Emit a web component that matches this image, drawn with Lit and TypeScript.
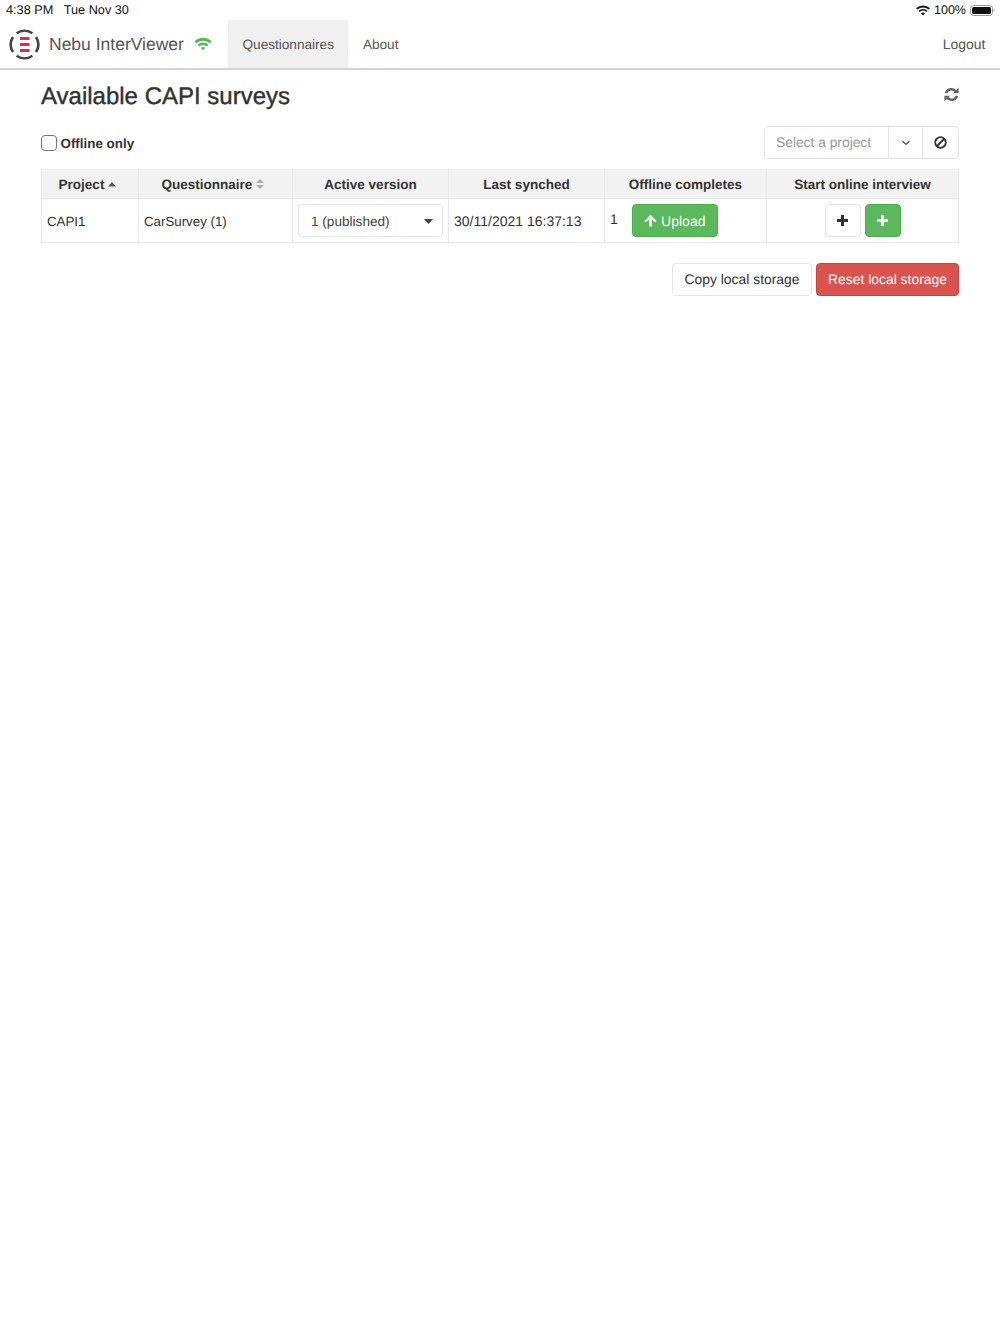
import { LitElement, html, css, svg } from "lit";
import { customElement } from "lit/decorators.js";

const plus = svg`<path d="M5 2h3v4h4v3H8v4H5V9H1V6h4z" fill="currentColor"/>`;

@customElement("app-root")
export class AppRoot extends LitElement {
  static styles = css`
    :host { display: block; height: 1334px; background: #fff; color: #333; font-family: "Liberation Sans", Arial, sans-serif; font-size: 14px; text-rendering: geometricPrecision; }
    * { box-sizing: border-box; }
    svg { display: block; }
    .status { height: 20px; display: flex; align-items: center; justify-content: space-between; padding: 0 5px 0 6px; font-size: 12.7px; color: #111; }
    .status .left { display: flex; gap: 10.5px; }
    .status .right { display: flex; align-items: center; gap: 4px; font-size: 12.5px; }
    .nav { height: 50px; display: flex; border-bottom: 2px solid #d4d4d4; align-items: stretch; }
    .brand { display: flex; align-items: center; width: 228px; padding-left: 8px; color: #555; font-size: 17.5px; }
    .brand .logo { margin-right: 8px; }
    .brand .wifi { margin-left: 10px; }
    .tab { display: flex; align-items: center; padding: 0 14.5px; color: #555; font-size: 13.6px; }
    .tab.active { background: #f0f0f0; }
    .tab.logout { font-size: 14px; }
    .spacer { flex: 1; }
    .main { padding: 0 41px; }
    .head { display: flex; justify-content: space-between; align-items: flex-start; height: 56px; padding-top: 13px; }
    h1 { margin: 0; font-size: 24px; font-weight: 400; line-height: 28px; color: #333; -webkit-text-stroke: 0.4px #333; }
    .refresh { margin-top: 4px; }
    .filter { display: flex; justify-content: space-between; align-items: center; height: 33px; margin-bottom: 10px; }
    .check { display: flex; align-items: center; font-weight: 700; gap: 3.5px; font-size: 13.4px; padding-top: 1px; }
    .box { width: 16px; height: 16px; border: 1.5px solid #777; border-radius: 4px; }
    .select { display: flex; height: 33px; width: 195px; border: 1px solid #e6e6e6; border-radius: 4px; color: #999; font-size: 13.8px; }
    .select > div { display: flex; align-items: center; justify-content: center; }
    .select .ph { width: 124px; padding-left: 11px; justify-content: flex-start; border-right: 1px solid #e6e6e6; }
    .select .dd { width: 34px; border-right: 1px solid #e6e6e6; color: #555; }
    .select .no { flex: 1; color: #333; }
    .table { display: grid; grid-template-columns: 97px 154px 156px 156px 162px 192px; width: 918px; border-left: 1px solid #e9e9e9; border-bottom: 1px solid #e9e9e9; }
    .th, .td { border-right: 1px solid #e9e9e9; display: flex; align-items: center; }
    .th { height: 30px; padding-top: 1px; background: #f2f2f2; font-weight: 700; font-size: 13.5px; justify-content: center; gap: 4px; border-bottom: 1px solid #e9e9e9; }
    .th.sortable { padding-right: 5px; }
    .td { height: 43px; padding: 1px 5px 0; font-size: 13.3px; }
    .td.date { font-size: 14px; padding-top: 0; }
    .sort { color: #555; }
    .sort.off { color: #aaa; }
    .version { width: 145px; height: 33px; margin-top: -1px; padding: 1px 9px 0 12px; border: 1px solid #e6e6e6; border-radius: 4px; display: flex; align-items: center; justify-content: space-between; color: #444; font-size: 13.6px; }
    .btn { display: inline-flex; align-items: center; justify-content: center; height: 33px; border-radius: 4px; border: 1px solid #e6e6e6; background: #fff; color: #333; font-size: 14px; }
    .btn.green { background: #5cb85c; border-color: #4cae4c; color: #fff; }
    .btn.red { background: #d9534f; border-color: #d43f3a; color: #fff; }
    .off-cell { gap: 14px; align-items: center; padding-top: 0; }
    .off-cell .n { margin-top: -3px; font-size: 14px; }
    .upload { width: 86px; gap: 4px; }
    .start { justify-content: center; gap: 4px; padding: 0; }
    .sq { width: 36px; }
    .actions { display: flex; justify-content: flex-end; gap: 4px; margin-top: 20px; width: 918px; }
    .actions .btn { padding-bottom: 1px; font-size: 13.9px; }
    .actions .copy { width: 140px; }
    .actions .red { width: 143px; }
  `;

  render() {
    return html`
      <div class="status">
        <div class="left"><span>4:38 PM</span><span>Tue Nov 30</span></div>
        <div class="right">
          <svg width="14" height="11" viewBox="0 0 14 11"><path d="M7 10.5 5 8.3a3 3 0 0 1 4 0zM3.7 7 2.5 5.7a6.8 6.8 0 0 1 9 0L10.3 7a5 5 0 0 0-6.6 0zM1.4 4.6 0 3.2a10.2 10.2 0 0 1 14 0l-1.4 1.4a8.2 8.2 0 0 0-11.2 0z" fill="#111"/></svg>
          <span>100%</span>
          <svg width="25" height="11" viewBox="0 0 25 11"><rect x=".5" y=".5" width="22" height="10" rx="3" fill="none" stroke="#999"/><rect x="2" y="2" width="19" height="7" rx="1.5" fill="#111"/><path d="M23.5 4v3a1.6 1.6 0 0 0 0-3z" fill="#999"/></svg>
        </div>
      </div>
      <div class="nav">
        <div class="brand">
          <svg class="logo" width="33" height="33" viewBox="0 0 33 33">
            <g fill="none" stroke="#444" stroke-width="2.6">
              <path d="M8.6 5.2A13.8 13.8 0 0 1 24.4 5.2"/><path d="M28 9A13.8 13.8 0 0 1 28 24"/><path d="M24.4 27.8A13.8 13.8 0 0 1 8.6 27.8"/><path d="M5 24A13.8 13.8 0 0 1 5 9"/>
            </g>
            <g fill="#e0213a"><rect x="12" y="9.1" width="9.5" height="2.8"/><rect x="12" y="15.1" width="9.5" height="2.8"/><rect x="12" y="21.1" width="9.5" height="2.8"/></g>
          </svg>
          <span>Nebu InterViewer</span>
          <svg class="wifi" width="18" height="14" viewBox="0 0 20 15"><path d="M10 14.5 7.6 12a3.4 3.4 0 0 1 4.8 0zM5.8 10.2 4 8.4a8.5 8.5 0 0 1 12 0l-1.8 1.8a6 6 0 0 0-8.4 0zM2.6 6.8.4 4.6a13.6 13.6 0 0 1 19.2 0l-2.2 2.2a10.6 10.6 0 0 0-14.8 0z" fill="#5cb85c"/></svg>
        </div>
        <div class="tab active">Questionnaires</div>
        <div class="tab">About</div>
        <div class="spacer"></div>
        <div class="tab logout">Logout</div>
      </div>
      <div class="main">
        <div class="head">
          <h1>Available CAPI surveys</h1>
          <svg class="refresh" width="15" height="15" viewBox="0 0 15 15" fill="none" stroke="#666" stroke-width="2.6"><path d="M2 6.2A5.7 5.7 0 0 1 12 4.5"/><path d="M13 8.8A5.7 5.7 0 0 1 3 10.5"/><path d="M14.6.6v5.6H9z" fill="#666" stroke="none"/><path d="M.4 14.4V8.8H6z" fill="#666" stroke="none"/></svg>
        </div>
        <div class="filter">
          <label class="check"><span class="box"></span>Offline only</label>
          <div class="select">
            <div class="ph">Select a project</div>
            <div class="dd"><svg width="10" height="6" viewBox="0 0 10 6"><path d="M1.5 1 5 4.5 8.5 1" fill="none" stroke="currentColor" stroke-width="1.2"/></svg></div>
            <div class="no"><svg width="13" height="13" viewBox="0 0 13 13"><circle cx="6.5" cy="6.5" r="5.3" fill="none" stroke="currentColor" stroke-width="1.8"/><path d="M3 10 10 3" stroke="currentColor" stroke-width="1.8"/></svg></div>
          </div>
        </div>
        <div class="table">
          <div class="th sortable">Project <svg class="sort" width="8" height="5" viewBox="0 0 8 5"><path d="M4 0 8 4.5H0z" fill="currentColor"/></svg></div>
          <div class="th sortable">Questionnaire <svg class="sort off" width="8" height="10" viewBox="0 0 8 10"><path d="M4 0 8 4H0zM4 10 0 6h8z" fill="currentColor"/></svg></div>
          <div class="th">Active version</div>
          <div class="th">Last synched</div>
          <div class="th">Offline completes</div>
          <div class="th">Start online interview</div>

          <div class="td">CAPI1</div>
          <div class="td">CarSurvey (1)</div>
          <div class="td">
            <div class="version"><span>1 (published)</span><svg width="9" height="5" viewBox="0 0 9 5"><path d="M0 0h9L4.5 5z" fill="#444"/></svg></div>
          </div>
          <div class="td date">30/11/2021 16:37:13</div>
          <div class="td off-cell">
            <span class="n">1</span>
            <span class="btn green upload"><svg width="13" height="13" viewBox="0 0 13 13"><path d="M6.5.8 12.6 7l-1.6 1.6-3.1-3.1V12.4H5.1V5.5L2 8.6.4 7z" fill="#fff"/></svg>Upload</span>
          </div>
          <div class="td start">
            <span class="btn sq"><svg width="13" height="15" viewBox="0 0 13 15">${plus}</svg></span>
            <span class="btn green sq"><svg width="13" height="15" viewBox="0 0 13 15">${plus}</svg></span>
          </div>
        </div>
        <div class="actions">
          <span class="btn copy">Copy local storage</span>
          <span class="btn red">Reset local storage</span>
        </div>
      </div>
    `;
  }
}
